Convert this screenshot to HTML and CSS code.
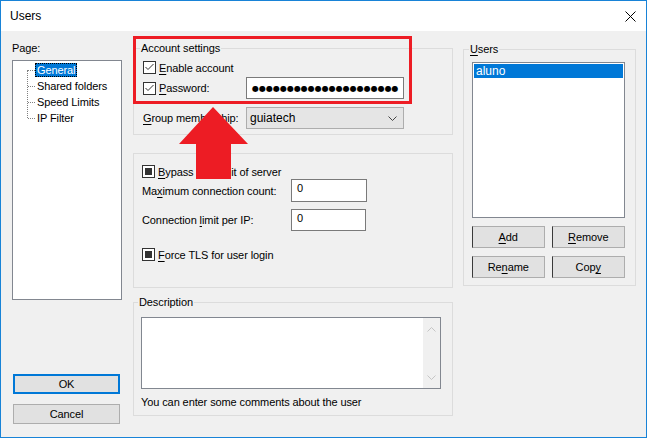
FILE: index.html
```html
<!DOCTYPE html>
<html>
<head>
<meta charset="utf-8">
<link rel="stylesheet" href="styles.css">
</head>
<body>
<div class="window">
  <div class="titlebar">
    <span class="title">Users</span>
    <svg class="close" width="11" height="11" viewBox="0 0 11 11"><path d="M0.5 0.5 L10.5 10.5 M10.5 0.5 L0.5 10.5" stroke="#000" stroke-width="1" fill="none"/></svg>
  </div>
  <div class="content">
    <div class="col-left">
      <div class="label">Page:</div>
      <div class="tree">
        <ul>
          <li class="sel"><span>General</span></li>
          <li><span>Shared folders</span></li>
          <li><span>Speed Limits</span></li>
          <li><span>IP Filter</span></li>
        </ul>
      </div>
      <div class="dlg-buttons">
        <button class="btn default">OK</button>
        <button class="btn">Cancel</button>
      </div>
    </div>

    <div class="col-mid">
      <fieldset class="group account">
        <legend>Account settings</legend>
        <label class="check-row"><span class="cb"><svg width="11" height="11" viewBox="0 0 11 11"><path d="M1.5 5 L4 7.5 L9.5 2" stroke="#333" stroke-width="1" fill="none"/></svg></span><span><u>E</u>nable account</span></label>
        <div class="field-row pw">
          <label class="check-row pw-label"><span class="cb"><svg width="11" height="11" viewBox="0 0 11 11"><path d="M1.5 5 L4 7.5 L9.5 2" stroke="#333" stroke-width="1" fill="none"/></svg></span><span><u>P</u>assword:</span></label>
          <span class="input password">●●●●●●●●●●●●●●●●●●●●●</span>
        </div>
        <div class="field-row grp">
          <span class="field-label"><u>G</u>roup membership:</span>
          <span class="combo"><span>guiatech</span><svg width="9" height="5" viewBox="0 0 9 5"><path d="M0.5 0.5 L4.5 4.5 L8.5 0.5" stroke="#444" stroke-width="1" fill="none"/></svg></span>
        </div>
      </fieldset>

      <fieldset class="group limits">
        <label class="check-row"><span class="cb mixed"><i></i></span><span><u>B</u>ypass userlimit of server</span></label>
        <div class="field-row maxc">
          <span class="field-label wide">Ma<u>x</u>imum connection count:</span>
          <span class="input num">0</span>
        </div>
        <div class="field-row perip">
          <span class="field-label wide">Connection <u>l</u>imit per IP:</span>
          <span class="input num n2">0</span>
        </div>
        <label class="check-row tls"><span class="cb mixed"><i></i></span><span><u>F</u>orce TLS for user login</span></label>
      </fieldset>

      <fieldset class="group desc">
        <legend>Description</legend>
        <div class="textarea">
          <div class="text-body"></div>
          <div class="vscroll">
            <svg width="9" height="5" viewBox="0 0 9 5"><path d="M0.5 4.5 L4.5 0.5 L8.5 4.5" stroke="#c5c5c5" stroke-width="1" fill="none"/></svg>
            <svg width="9" height="5" viewBox="0 0 9 5"><path d="M0.5 0.5 L4.5 4.5 L8.5 0.5" stroke="#c5c5c5" stroke-width="1" fill="none"/></svg>
          </div>
        </div>
        <div class="hint">You can enter some comments about the user</div>
      </fieldset>
    </div>

    <div class="col-right">
      <fieldset class="group users">
        <legend><u>U</u>sers</legend>
        <div class="listbox">
          <div class="list-item sel">aluno</div>
        </div>
        <div class="btn-row">
          <button class="btn ubtn w73"><u>A</u>dd</button>
          <button class="btn ubtn w74"><u>R</u>emove</button>
        </div>
        <div class="btn-row">
          <button class="btn ubtn w73">Re<u>n</u>ame</button>
          <button class="btn ubtn w74">Cop<u>y</u></button>
        </div>
      </fieldset>
    </div>
  </div>

  <div class="callout-box"></div>
  <svg class="callout-arrow" width="647" height="438" viewBox="0 0 647 438">
    <polygon points="213,107 179,144 196,144 196,179 231,179 231,144 248,144" fill="#ed1c24"/>
  </svg>
</div>
</body>
</html>
```

FILE: styles.css
```css
html, body {
  margin: 0;
  padding: 0;
  background: #f0f0f0;
}
body {
  font-family: "Segoe UI", "Liberation Sans", Arial, sans-serif;
  font-size: 11px;
  letter-spacing: -0.1px;
  color: #000;
}
u { text-decoration: underline; text-underline-offset: 2px; }

.window {
  position: relative;
  width: 647px;
  height: 438px;
  box-sizing: border-box;
  border: 1px solid #1883d7;
  background: #f0f0f0;
  display: flex;
  flex-direction: column;
  overflow: hidden;
}

.titlebar {
  height: 30px;
  flex: none;
  background: #fff;
  display: flex;
  align-items: center;
  justify-content: space-between;
  padding: 0 10px 0 9px;
}
.title { font-size: 12px; line-height: 16px; letter-spacing: 0; }
.close { display: block; }

.content {
  flex: 1;
  display: flex;
  align-items: flex-start;
  padding: 10px 10px 13px 11px;
  min-height: 0;
}

/* left column */
.col-left {
  width: 110px;
  align-self: stretch;
  display: flex;
  flex-direction: column;
  margin-right: 11px;
}
.label { line-height: 14px; }
.tree {
  margin-top: 5px;
  height: 240px;
  box-sizing: border-box;
  border: 1px solid #828790;
  background: #fff;
}
.tree ul {
  list-style: none;
  margin: 0;
  padding: 1px 0 0 0;
  position: relative;
}
.tree ul::before {
  content: "";
  position: absolute;
  left: 14px;
  top: 9px;
  height: 48px;
  border-left: 1px dotted #808080;
}
.tree li {
  position: relative;
  height: 16px;
  padding-left: 22px;
  display: flex;
  align-items: center;
}
.tree li::before {
  content: "";
  position: absolute;
  left: 15px;
  top: 8px;
  width: 7px;
  border-top: 1px dotted #808080;
}
.tree li span {
  display: inline-block;
  line-height: 12px;
  padding: 0 1px;
  border: 1px dotted transparent;
  white-space: nowrap;
}
.tree li.sel span {
  background: #0078d7;
  color: #fff;
  border-color: #000;
}

.dlg-buttons {
  margin-top: auto;
  display: flex;
  flex-direction: column;
  gap: 10px;
  padding-left: 1px;
}
.btn {
  font-family: inherit;
  font-size: 11px;
  letter-spacing: -0.1px;
  color: #000;
  background: #e1e1e1;
  border: 1px solid #adadad;
  box-sizing: border-box;
  padding: 0;
  margin: 0;
  line-height: 16px;
}
.dlg-buttons .btn {
  width: 107px;
  height: 20px;
}
.btn.default {
  border: 2px solid #0078d7;
}

/* groups */
.group {
  margin: 0;
  border: 1px solid #dcdcdc;
  min-width: 0;
}
.group legend {
  padding: 0 1px;
  margin-left: -3px;
  line-height: 14px;
}

.col-mid {
  width: 320px;
  display: flex;
  flex-direction: column;
}
.account {
  padding: 5px 10px 5px 9px;
}
.check-row {
  display: flex;
  align-items: center;
  gap: 3px;
  height: 15px;
  white-space: nowrap;
}
.cb {
  width: 13px;
  height: 13px;
  box-sizing: border-box;
  border: 1px solid #333;
  background: #fff;
  flex: none;
  display: flex;
  align-items: center;
  justify-content: center;
}
.cb svg { display: block; }
.cb.mixed i {
  display: block;
  width: 7px;
  height: 7px;
  background: #333;
}

.field-row {
  display: flex;
  align-items: center;
}
.pw { margin-top: 2px; height: 22px; }
.pw-label { width: 103px; }
.input {
  display: flex;
  align-items: center;
  box-sizing: border-box;
  background: #fff;
  border: 1px solid #7a7a7a;
}
.password {
  width: 158px;
  height: 22px;
  padding-left: 5px;
  font-family: "DejaVu Sans", sans-serif;
  font-size: 8px;
  letter-spacing: 0;
  overflow: hidden;
  white-space: nowrap;
}
.grp { margin-top: 8px; height: 22px; }
.field-label { width: 103px; white-space: nowrap; }
.combo {
  width: 158px;
  height: 22px;
  box-sizing: border-box;
  border: 1px solid #adadad;
  background: #e5e5e5;
  display: flex;
  align-items: center;
  justify-content: space-between;
  padding: 0 6px 0 3px;
}
.combo span { font-size: 12px; letter-spacing: 0; }

.limits {
  margin-top: 18px;
  padding: 10px 8px 25px 8px;
}
.field-label.wide { width: 149px; }
.maxc { height: 23px; }
.num {
  width: 76px;
  height: 23px;
  padding-left: 5px;
  align-items: flex-start;
  padding-top: 2px;
}
.perip { margin-top: 7px; height: 22px; }
.num.n2 { width: 75px; height: 22px; }
.tls { margin-top: 16px; }

.desc {
  margin-top: 7px;
  padding: 8px 11px 5px 7px;
}
.textarea {
  height: 72px;
  box-sizing: border-box;
  border: 1px solid #828790;
  background: #fff;
  display: flex;
}
.text-body { flex: 1; }
.vscroll {
  width: 17px;
  background: #f0f0f0;
  display: flex;
  flex-direction: column;
  justify-content: space-between;
  align-items: center;
  padding: 9px 0 8px;
}
.vscroll svg { display: block; }
.hint { margin-top: 6px; line-height: 15px; white-space: nowrap; }

/* right column */
.col-right {
  width: 173px;
  margin-left: 10px;
  margin-top: 1px;
}
.users {
  padding: 6px 10px 7px 8px;
}
.listbox {
  height: 156px;
  width: 153px;
  box-sizing: border-box;
  border: 1px solid #828790;
  background: #fff;
  padding: 1px;
}
.list-item {
  height: 14px;
  line-height: 14px;
  padding-left: 2px;
  font-size: 12px;
  letter-spacing: 0;
}
.list-item.sel { background: #0078d7; color: #fff; }
.btn-row {
  display: flex;
  gap: 7px;
  margin-top: 8px;
}
.btn-row:first-of-type { margin-top: 7px; }
.ubtn { height: 22px; border-left-color: #3a3a3a; }
.w73 { width: 73px; }
.w74 { width: 74px; }

/* annotation overlay */
.callout-box {
  position: absolute;
  left: 132px;
  top: 35px;
  width: 279px;
  height: 68px;
  box-sizing: border-box;
  border: 3px solid #ed1c24;
  pointer-events: none;
}
.callout-arrow {
  position: absolute;
  left: -1px;
  top: -1px;
  pointer-events: none;
}
```
